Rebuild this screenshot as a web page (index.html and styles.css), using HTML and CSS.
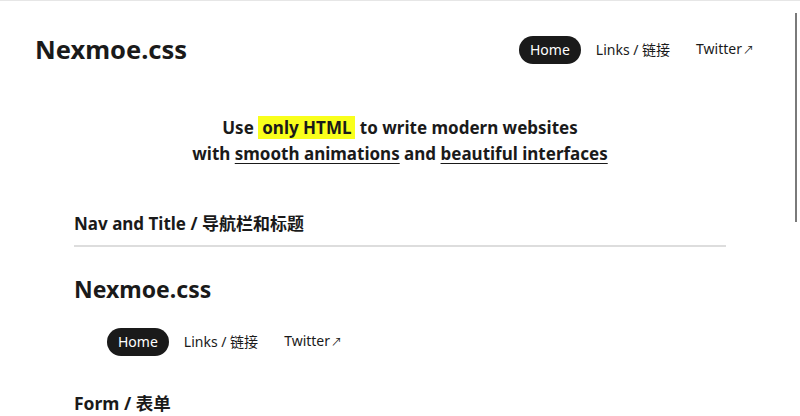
FILE: index.html
```html
<!DOCTYPE html>
<html>
<head>
<meta charset="utf-8">
<link rel="stylesheet" href="styles.css">
</head>
<body>
<div class="topline"></div>
<header class="site-header">
  <h1 class="site-title">Nexmoe.css</h1>
  <nav class="nav">
    <a class="nav-item active">Home</a>
    <a class="nav-item">Links / 链接</a>
    <a class="nav-item">Twitter<span class="arrow">↗</span></a>
  </nav>
</header>
<main class="content">
  <p class="hero">Use <mark class="hl">only HTML</mark> to write modern websites<br>with <u>smooth animations</u> and <u>beautiful interfaces</u></p>
  <h2 class="section-title">Nav and Title / 导航栏和标题</h2>
  <h1 class="demo-title">Nexmoe.css</h1>
  <nav class="nav demo-nav">
    <a class="nav-item active">Home</a>
    <a class="nav-item">Links / 链接</a>
    <a class="nav-item">Twitter<span class="arrow">↗</span></a>
  </nav>
  <h2 class="form-title">Form / 表单</h2>
</main>
<div class="scroll-thumb"></div>
</body>
</html>
```
FILE: styles.css
```css
html, body {
  margin: 0;
  padding: 0;
  background: #fff;
  overflow: hidden;
}
body {
  font-family: "Noto Sans", "Noto Sans CJK SC", sans-serif;
  color: #1a1a1a;
}
.topline {
  height: 1px;
  background: #e6e6e6;
}
.site-header {
  display: flex;
  align-items: center;
  justify-content: space-between;
  padding: 20px 35px 0 35px;
  height: 57px;
}
.site-title {
  margin: 0;
  font-size: 25.5px;
  font-weight: 700;
  line-height: 1;
}
.nav {
  display: flex;
  align-items: center;
  gap: 4px;
}
.nav-item {
  font-size: 14px;
  line-height: 28px;
  padding: 0 11px;
  border-radius: 14px;
  color: #1a1a1a;
}
.nav-item.active {
  background: #1a1a1a;
  color: #fff;
}
.arrow {
  font-size: 11px;
  margin-left: 1px;
}
.content {
  width: 652px;
  margin: 0 auto;
}
.hero {
  margin: 37px 0 0 0;
  text-align: center;
  font-weight: 700;
  font-size: 17px;
  line-height: 26px;
}
.hl {
  background: #f9ff1c;
  color: #1a1a1a;
  padding: 0 4px;
}
.hero u {
  text-underline-offset: 3px;
}
.section-title {
  margin: 45px 0 0 0;
  font-size: 17px;
  font-weight: 700;
  line-height: 24px;
  padding-bottom: 9px;
  border-bottom: 2px solid #dddddd;
}
.demo-title {
  margin: 27px 0 0 0;
  font-size: 23px;
  line-height: 31px;
  font-weight: 700;
}
.demo-nav {
  margin: 22px 0 0 33px;
}
.form-title {
  margin: 35px 0 0 0;
  font-size: 17.5px;
  line-height: 24px;
  font-weight: 700;
}
.scroll-thumb {
  position: absolute;
  right: 3px;
  top: 13px;
  width: 2px;
  height: 209px;
  background: #7a7a7a;
}
```
